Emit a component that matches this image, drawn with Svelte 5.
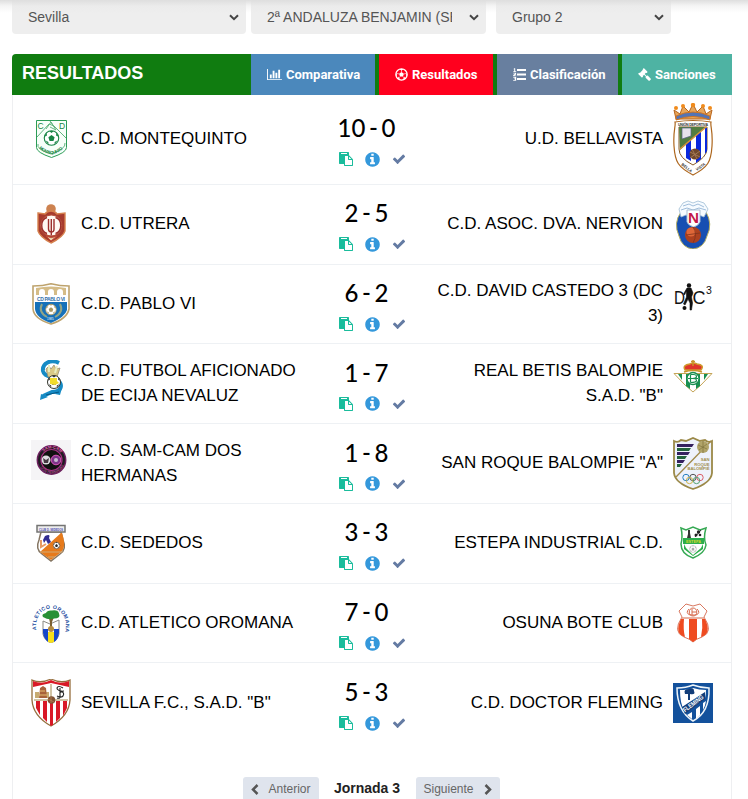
<script lang="ts">
    const filters = [
        { label: 'Sevilla', size: 'medium' },
        { label: '2ª ANDALUZA BENJAMIN (SEVILLA)', size: 'wide' },
        { label: 'Grupo 2', size: 'small' }
    ];

    const tabs = [
        { label: 'Comparativa', icon: 'chart' },
        { label: 'Resultados', icon: 'ball' },
        { label: 'Clasificación', icon: 'list' },
        { label: 'Sanciones', icon: 'gavel' }
    ];

    const matches = [
        { home: 'C.D. MONTEQUINTO', homeCrest: 'montequinto', score: '10 - 0', away: 'U.D. BELLAVISTA', awayCrest: 'bellavista' },
        { home: 'C.D. UTRERA', homeCrest: 'utrera', score: '2 - 5', away: 'C.D. ASOC. DVA. NERVION', awayCrest: 'nervion' },
        { home: 'C.D. PABLO VI', homeCrest: 'pablo', score: '6 - 2', away: 'C.D. DAVID CASTEDO 3 (DC 3)', awayCrest: 'castedo', awayLong: true },
        { home: 'C.D. FUTBOL AFICIONADO DE ECIJA NEVALUZ', homeCrest: 'ecija', homeLong: true, score: '1 - 7', away: 'REAL BETIS BALOMPIE S.A.D. "B"', awayCrest: 'betis', awayLong: true },
        { home: 'C.D. SAM-CAM DOS HERMANAS', homeCrest: 'samcam', homeLong: true, score: '1 - 8', away: 'SAN ROQUE BALOMPIE "A"', awayCrest: 'sanroque' },
        { home: 'C.D. SEDEDOS', homeCrest: 'sededos', score: '3 - 3', away: 'ESTEPA INDUSTRIAL C.D.', awayCrest: 'estepa' },
        { home: 'C.D. ATLETICO OROMANA', homeCrest: 'oromana', score: '7 - 0', away: 'OSUNA BOTE CLUB', awayCrest: 'osuna' },
        { home: 'SEVILLA F.C., S.A.D. "B"', homeCrest: 'sevilla', score: '5 - 3', away: 'C.D. DOCTOR FLEMING', awayCrest: 'fleming' }
    ];

    // every crest is 40 wide, only some are taller or shorter
    const heights: Record<string, number> = { bellavista: 73, nervion: 50, pablo: 42, sanroque: 53, sevilla: 48 };
</script>

{#snippet ball(x: number, y: number, r: number, color: string)}
    <g transform="translate({x} {y}) scale({r / 10})">
        <circle r="9.3" fill="#fff" stroke={color} stroke-width="1.4" />
        <path fill={color} d="M0-4 4-1 2.5 4h-5L-4-1zM-3-9h6L0-6.500zM6-7l3 5-3-1zM-6-7l-3 5 3-1zM8 3 4 8 4 5zM-8 3l4 5 0-3z" />
    </g>
{/snippet}

{#snippet crest(id: string)}
    <svg class="crest" width="40" height={heights[id] ?? 40} viewBox="0 0 40 {heights[id] ?? 40}" aria-hidden="true">
        {#if id === 'montequinto'}
            <path d="M5.500 1.500h30v27q0 5-15 10-15-5-15-10z" fill="#f7fff9" stroke="#2b9c57" />
            <path d="m6 18 12-13 5 2 12 12M15 10l5-7 5 8-6-3M19 2l5 7M7 25q-2 5 13 10 15-5 14-11" fill="none" stroke="#62b581" stroke-width="1" />
            {@render ball(20.5, 19, 7.8, '#168443')}
            <text x="6.500" y="10" font-size="8.500" fill="#168443">C</text>
            <text x="28" y="10" font-size="8.500" fill="#168443">D</text>
            <path id="montequinto-arc" d="M8 29q12.500 12 25 0" fill="none" />
            <text font-size="4.300" font-weight="bold" fill="#168443"><textPath href="#montequinto-arc" textLength="27">MONTEQUINTO</textPath></text>
        {:else if id === 'bellavista'}
            <path d="m3 16-2-9 6 4 3-8 6 6 4-8 4 8 6-6 3 8 6-4-2 9z" fill="#e7a65b" stroke="#b7641c" />
            <path d="M3 13q17-8 34 0v4q-17-7-34 0z" fill="#5474b4" stroke="#d4751b" />
            <g fill="#f08b1c"><circle cx="3" cy="5" r="2" /><circle cx="10" cy="3" r="2" /><circle cx="20" cy="2" r="2.200" /><circle cx="30" cy="3" r="2" /><circle cx="37" cy="5" r="2" /></g>
            <path d="M2 19q18-3 36 0c-1 4 2 8 1 24-1 16-4 21-19 29C5 64 2 59 1 43 0 27 3 23 2 19z" fill="#fff" stroke="#ad661d" stroke-width="1.200" />
            <path d="M6 24h28v22q0 8-14 16Q6 55 6 46z" fill="#fff" stroke="#895a24" />
            <path d="M13 25h5v33l-5-3zM23 25h5v31l-5 4zM32 25h2v23l-2 3z" fill="#0928dd" />
            <path d="M6 24h27L7 47z" fill="#527d40" />
            <path d="M9 25h9v8l-9 3z" fill="#e6e2eb" stroke="#555f83" stroke-width=".7" />
            <path d="M7 46 33 24" stroke="#d9923c" stroke-width="1.500" />
            <circle cx="22" cy="51" r="5.500" fill="#70472b" />
            <path d="m17 49 10 5m-8-8 5 10m-7-1 10-7" stroke="#a27854" />
            <text x="5" y="23" font-size="3.600" font-weight="bold" textLength="30" fill="#333">UNIÓN DEPORTIVA</text>
            <text x="8" y="62" font-size="3.800" font-weight="bold" transform="rotate(38 8 62)" fill="#333">BELLA</text>
            <text x="24" y="68" font-size="3.800" font-weight="bold" transform="rotate(-36 24 68)" fill="#333">VISTA</text>
        {:else if id === 'utrera'}
            <circle cx="20" cy="5" r="4.800" fill="#cd8250" />
            <path d="m7 9 7 1q2-3 6-3t6 3l8-1v18q-2 6-14 12Q9 33 7 27z" fill="#a73b2e" stroke="#d6814e" stroke-width="1.400" />
            <circle cx="20.300" cy="21.500" r="10.500" fill="#fff8f2" stroke="#b5513c" stroke-width="1.200" />
            <path d="M16 13.500c-7 2-7 14 0 16M17.500 15v10q0 3 2.800 3t2.700-3V15m-2.700 0v16.500M24.500 13.500c7 2 7 14 0 16" fill="none" stroke="#9d2f2c" stroke-width="1.400" />
            <path d="M15 32q5 3 11 0l-6 5z" fill="#e8d3ad" stroke="#c14b35" />
        {:else if id === 'nervion'}
            <path d="M8 13h25q7 12 1 24-3 12-14 13Q9 49 6 37 0 24 8 13z" fill="#174fb2" stroke="#b4af64" />
            <path d="m6 10 4-6 5-2 5 2 5-2 6 2 4 6-4 8-5-2-6 3-7-3-5 2z" fill="#f6fbff" stroke="#9ebdd4" stroke-width=".8" />
            <path d="m10 7 6-2 4 2 5-2 6 3M8 11l6-2 6 2 6-2 7 2" fill="none" stroke="#89acd0" stroke-width=".8" />
            <path d="M14 11h13v12q-2 4-6.500 5-5.500-2-6.500-5z" fill="#fff" stroke="#a9bfd2" />
            <text x="15" y="24" font-size="15" font-weight="bold" textLength="11" lengthAdjust="spacingAndGlyphs" fill="#c31848">N</text>
            <circle cx="20" cy="36" r="8" fill="#ad411f" /><circle cx="18" cy="33" r="4.500" fill="#df6738" />
            <path d="m13 36 14-2m-7-6q5 7 0 16" fill="none" stroke="#80341d" stroke-width=".8" />
        {:else if id === 'pablo'}
            <path d="M2 3q10 0 18-2.200Q29 3 38 3v23q-2 10-18 15Q3 36 2 26z" fill="#fff" stroke="#bea36d" stroke-width="1.600" />
            <path d="M5 5q15-3 30 0v7H5z" fill="#d5bc87" />
            <path d="M8 13V9q0-3 3-3t3 3v4m3 0V9q0-3 3-3t3 3v4m3 0V9q0-3 3-3t3 3v4z" fill="#fff" />
            <path d="M4 19h32v8q-2 7-16 13Q5 35 4 26z" fill="#1671b9" />
            <text x="6" y="17.500" font-size="5" font-weight="bold" textLength="28" fill="#356eaa">CD PABLO VI</text>
            <path d="M11 21q-4 8 5 13m13-13q4 8-5 13" stroke="#91a587" stroke-width="2" fill="none" />
            {@render ball(20, 26.5, 5.7, '#a99761')}
            <text x="16" y="37" font-size="3" fill="#fff">1985</text>
        {:else if id === 'castedo'}
            <text x="1" y="24" font-size="19" textLength="11" lengthAdjust="spacingAndGlyphs" fill="#111">D</text>
            <text x="19.500" y="24" font-size="19" textLength="13" lengthAdjust="spacingAndGlyphs" fill="#111">C</text>
            <text x="33" y="14" font-size="10.500" fill="#111">3</text>
            <circle cx="16" cy="5.500" r="2.200" fill="#111" />
            <path d="M14 8h4l2 5-1.500 4 1 6-1 7h-1.500v-7l-2-4-3 6-1.500-1 3-7v-6l-2 4-1-1z" fill="#111" stroke="#111" stroke-width=".6" />
            <circle cx="11.500" cy="28" r="2" fill="#111" />
        {:else if id === 'ecija'}
            <path d="M28 3c-8-4-17 0-16 8 1 6 9 5 14 9 7 5 4 12-5 12l-9 4" fill="none" stroke="#168bc5" stroke-width="4" />
            <path d="m24 34 7-6-2 7zM10 34l-1 6 8-3z" fill="#168bc5" />
            <path d="m15 9 3-3 2 3 3-4 2 4 4-1-3 9H17z" fill="#d9c987" stroke="#8b826c" stroke-width=".7" />
            <path d="M18 5v7m8-6-2 7" stroke="#e9edc0" stroke-width="2" />
            {@render ball(23, 22, 7, '#30332b')}
            <path d="M19 18h7v3l2 2-4 2-5-1z" fill="#f2dc2d" /><path d="m15 35 13-3" stroke="#075783" />
        {:else if id === 'betis'}
            <path d="m20 32-8-7L1 13.500h38L28 25z" fill="#fff" stroke="#c5a557" />
            <path d="m5 14 4 6v-6zM13 14v12l4 3V14zM23 14v15l4-3V14zM31 14v6l4-6z" fill="#198f50" />
            <path d="M12 10Q9 5 17 4q3-2 7 0 8 1 4 6z" fill="#df352b" stroke="#cf982b" stroke-width="1.400" />
            <path d="M18 1.500h4M20 0v6M11 12q9-3 18 0" fill="none" stroke="#c99329" stroke-width="1.500" />
            <circle cx="20" cy="18.500" r="6" fill="#fff" stroke="#198f50" stroke-width="1.300" />
            <path d="M17.500 14.500v8m0-8h3q3 0 3 2t-4 2q4 0 4 2t-6 2M15 18.500h10" fill="none" stroke="#198f50" stroke-width="1.200" />
        {:else if id === 'samcam'}
            <path d="M0 0h40v40H0z" fill="#f5f4f6" />
            <circle cx="20.500" cy="20" r="14.200" fill="#201b22" stroke="#6d1f5e" stroke-width="1.500" />
            <circle cx="20.500" cy="20" r="10.500" fill="#111" stroke="#a53081" stroke-width="1.200" />
            <circle cx="15" cy="20" r="4.500" fill="#dedbe1" /><path d="m12 18 3 2 3-2-1 5h-4z" fill="#453943" />
            <circle cx="25" cy="20" r="4.800" fill="#7e358a" stroke="#dc57ba" /><circle cx="25" cy="20" r="2" fill="#c7bdd0" />
            <path id="samcam-top" d="M9 20a11.500 11.500 0 0 1 23 0" fill="none" />
            <path id="samcam-bottom" d="M7 20a13.500 13.500 0 0 0 27 0" fill="none" />
            <text font-size="4" font-weight="bold" fill="#e164b1"><textPath href="#samcam-top" startOffset="9">SAM-CAM</textPath></text>
            <text font-size="3.500" fill="#d45ba9"><textPath href="#samcam-bottom" startOffset="8">DOS HERMANAS</textPath></text>
        {:else if id === 'sededos'}
            <path d="m10 9-2 8q-4 9 3 14l9 7 9-7q7-5 3-14l-2-8z" fill="#fff" stroke="#857663" stroke-width="1.500" />
            <path d="M30 10 9 29l11 8 9-7q7-5 2-20z" fill="#e67a1b" />
            <path d="M6 2.500h28V9H6z" fill="#eee" stroke="#747473" stroke-width="1.500" />
            <text x="8" y="7.500" font-size="4" font-weight="bold" textLength="24" lengthAdjust="spacingAndGlyphs" fill="#4b4bb0">CLUB D. SEDEDOS</text>
            <path d="M14 13q6-3 4 2l2 4-3 2-2-4-2 3-1-3z" fill="#322c91" /><path d="M10 17v7l5-3" fill="none" stroke="#e89b63" stroke-width="2" />
            {@render ball(25.5, 22.5, 3.5, '#292522')}
            <path d="M9 29h23M17 34h7" stroke="#d1aa77" />
        {:else if id === 'estepa'}
            <path d="m8 5 5 2 7-3 7 3 6-2q-3 10 0 17-1 8-13 13Q8 31 8 21q2-8 0-16z" fill="#fff" stroke="#36a954" stroke-width="1.500" />
            <path d="M10 15h21v6H10z" fill="#2cae4c" /><path d="M11 21v5l9 7 10-7v-5l-2 4-8 7-7-7z" fill="#2cae4c" />
            <path d="M15 7h2v3l1 5h-4l1-4z" fill="#333" /><path d="m22 14 6-7" stroke="#333" /><circle cx="23" cy="12" r="1.500" fill="#222" /><circle cx="25.500" cy="9" r="1.700" fill="#222" /><circle cx="27" cy="12" r="1.300" fill="#222" />
            <text x="13" y="19.500" font-size="4" font-weight="bold" textLength="15" lengthAdjust="spacingAndGlyphs" fill="#d3d92c">ESTEPA</text>
            {@render ball(20, 26, 3.7, '#a7a7a7')}
        {:else if id === 'oromana'}
            <path id="oromana-arc" d="M5.500 28C1-2 39-2 34.500 28" fill="none" />
            <text font-size="5.200" font-weight="bold" fill="#224ca0"><textPath href="#oromana-arc" startOffset="1" textLength="61">ATLETICO OROMANA</textPath></text>
            <path d="m12 18 7 3 9-4v14q-1 6-8 9-7-3-8-9z" fill="#fff" stroke="#8a8983" />
            <path d="M12 26h5v13q-4-3-5-9zM23 26h5v4q-1 7-5 9z" fill="#1647ca" /><path d="M17 29h6v10l-3 1-3-1z" fill="#f6df1b" />
            <path d="m18 15 1 5v8h2v-9l2-5" fill="#7b6031" /><path d="M12 14q-2-3 3-4 1-3 6-2.500 6-1 7 3 2 5-5 5-5 2-11-1.500z" fill="#289036" />
            <circle cx="20" cy="26" r="3" fill="#b28a42" />
        {:else if id === 'osuna'}
            <path d="m13 1 7 2 7-2 7 7-3 6q10 15-2 20-6 2-9 5-3-3-9-5-12-5-2-20L6 8z" fill="#fff" stroke="#d97860" />
            <path d="M8 16h3q-1 11 1 18Q1 31 8 16zM16 16h8v20l-4 3-4-3zM29 16h3q7 15-4 18 2-9 1-18z" fill="#ef4b20" />
            <path d="M9 15h22M16 6q-4 4 1 6h6q5-2 1-6m-4-1c-5 0-5 8 0 8s5-8 0-8m-1 1v6m0-3h4" fill="none" stroke="#d5684a" />
        {:else if id === 'sevilla'}
            <path d="M1 1q9 4 19-1 10 5 19 1v20q-1 16-19 26Q2 37 1 21z" fill="#fff" stroke="#956e3d" stroke-width="1.300" />
            <path d="M2 2q9 4 18-1 9 5 18 1v6L20 4 2 8zM5 22h4v14l-4-7zM12 22h4v21l-4-4zM19 22h3v24l-2 1-1-1zM25 22h4v17l-4 4zM32 22h4v7l-4 8z" fill="#d91926" />
            <path d="M3 21h34M20 5v17" stroke="#a58a4c" /><path d="M4 13h4v6H4zM14 13h4v6h-4z" fill="#c7ab72" /><path d="m9 9 3-2 3 2 1 10H8z" fill="#a8623b" /><path d="M9 12h5m-6 4h8" stroke="#e5bd75" />
            <path d="M32 9q-5-3-6 0 0 2 4 3 4 2 2 5-2 2-6 0M29 9v10m4-7q-5 0-4 4t-3 3" fill="none" stroke="#222" stroke-width="1.100" />
            <circle cx="20.500" cy="21" r="3.800" fill="#805335" /><path d="m17 20 6 3m-3-5v6" stroke="#c08857" stroke-width=".7" />
        {:else if id === 'fleming'}
            <path d="M0 0h40v40H0z" fill="#13519c" /><path d="M4 5q9 0 16-3 8 3 16 3 1 24-16 33Q4 28 4 5z" fill="#13519c" stroke="#eef5fa" stroke-width="1.500" />
            <path d="M7 7q8 0 13-2 6 2 13 2 0 4-1 8L11 27Q7 20 7 7zM14 32l5-3v7zM23 26l4-3v9l-4 4zM30 20l3-2q-1 6-3 9z" fill="#fff" />
            <path d="M12 11q-2-5 4-5 5-2 5 2 2 4-4 3v6h-2v-6zM9 24l23-15v7L12 31z" fill="#123d79" />
            <text x="12" y="29.500" font-size="6.500" font-weight="bold" textLength="24" lengthAdjust="spacingAndGlyphs" transform="rotate(-37 12 29.500)" fill="#fff">FLEMING</text>
        {:else}
            <path d="M1 4q4 2 7-1l5 1 7-3 7 3 5-1q3 3 7 1v32q-1 10-19 16Q2 46 1 36z" fill="#eef2fb" stroke="#9b8948" stroke-width="1.800" />
            <path d="M4 7h17l-2 3H4zM4 15h13l-2 3H4zM4 23h8l-2 3H4z" fill="#35215f" /><path d="M4 11h14l-2 3H4zM4 19h10l-2 3H4zM4 27h5l-2 3H4z" fill="#24633c" />
            <path d="M3 40 38 4" stroke="#a18a4b" stroke-width="1.300" /><circle cx="30" cy="10" r="6" fill="#b1a469" /><path d="m25 8 9 4m-8 1 8-6m-4-3v12" stroke="#7f743e" stroke-width=".7" />
            <g font-size="4.200" font-weight="bold" fill="#a28e4c" text-anchor="end"><text x="36.500" y="24">SAN</text><text x="36.500" y="28.500">ROQUE</text><text x="36.500" y="33">BALOMPIÉ</text></g>
            <g fill="none"><circle cx="13" cy="40.500" r="3.200" stroke="#277fbd" /><circle cx="20" cy="40.500" r="3.200" stroke="#555" /><circle cx="27" cy="40.500" r="3.200" stroke="#da5d68" /><circle cx="16.500" cy="43.500" r="3.200" stroke="#ceb64d" /><circle cx="23.500" cy="43.500" r="3.200" stroke="#55a272" /></g>
        {/if}
    </svg>
{/snippet}

{#snippet tabIcon(name: string)}
    {#if name === 'chart'}
        <svg width="15" height="13" viewBox="0 0 2048 1792"><path d="M640 896v512H384V896h256zm384-512v1024H768V384h256zm1024 1152v128H0V128h128v1408h1920zm-640-896v768h-256V640h256zm384-384v1152h-256V256h256z" /></svg>
    {:else if name === 'ball'}
        <svg width="13" height="13" viewBox="0 0 13 13"><circle cx="6.500" cy="6.500" r="5.600" fill="none" stroke="#fff" stroke-width="1.300" /><path d="m6.500 4 2.400 1.800L8 8.600H5l-.9-2.800zM4 .9l2.500 1.500L9 .9zM.9 4.500 2 7.200.7 8zM12.100 4.500 11 7.200l1.300.8zM3 10.800l.4-2.200 1.900 3.200zM10 10.800l-.4-2.200-1.900 3.200z" /><path d="M6.500 2v2m2.300 2L11 5.500M8 8.500l1.500 2m-4.500-2-1.500 2M4.200 6 2 5.500" stroke="#fff" stroke-width=".6" /></svg>
    {:else if name === 'list'}
        <svg width="13" height="13" viewBox="0 0 13 13"><path d="M4 1h9v2H4zM4 5.500h9v2H4zM4 10h9v2H4zM1.200.2h1v3h1V4H.3v-.8h.9V1.300H.4zM.3 4.700h2.800v1.700L1.500 7.500h1.700v.8H.2V7l1.800-1.200v-.3H.3zM.3 9h2.900v3.700H.2V12H2v-.7H.9v-.7H2v-.8H.3z" /></svg>
    {:else}
        <svg width="13" height="13" viewBox="0 0 1792 1792"><path d="M1771 1536q0 53-37 90l-107 108q-39 37-91 37-53 0-90-37l-363-364q-38-36-38-90 0-53 43-96l-256-256-126 126q-14 14-34 14t-34-14q2 2 12.500 12t12.500 13 10 11.500 10 13.500 6 13.500 5.500 16.500 1.500 18q0 38-28 68-3 3-16.500 18t-19 20.500-18.500 16.500-22 15.500-22 9-26 4.500q-40 0-68-28l-408-408q-28-28-28-68 0-13 4.500-26t9-22 15.500-22 16.500-18.500 20.500-19 18-16.500q30-28 68-28 10 0 18 1.500t16.500 5.500 13.500 6 13.500 10 11.500 10 13 12.500 12 12.500q-14-14-14-34t14-34l348-348q14-14 34-14t34 14q-2-2-12.500-12t-12.500-13-10-11.500-10-13.500-6-13.500-5.500-16.500-1.500-18q0-38 28-68 3-3 16.500-18t19-20.500 18.500-16.500 22-15.500 22-9 26-4.500q40 0 68 28l408 408q28 28 28 68 0 13-4.500 26t-9 22-15.500 22-16.500 18.500-20.500 19-18 16.500q-30 28-68 28-10 0-18-1.500t-16.500-5.500-13.500-6-13.500-10-11.500-10-13-12.500-12-12.500q14 14 14 34t-14 34l-126 126 256 256q43-43 96-43 52 0 91 37l363 363q37 39 37 91z" /></svg>
    {/if}
{/snippet}

<div class="page">
    <div class="filters">
        {#each filters as filter}
            <button class="filter {filter.size}">
                <span>{filter.label}</span>
                <svg width="10" height="7" viewBox="0 0 10 7"><path d="m1 1.200 4 4 4-4" fill="none" stroke="#444" stroke-width="2" /></svg>
            </button>
        {/each}
    </div>

    <div class="panel">
        <div class="panel-head">
            <h1>RESULTADOS</h1>
            <div class="tabs">
                {#each tabs as tab}
                    <button class="tab {tab.icon}">
                        {@render tabIcon(tab.icon)}
                        <span>{tab.label}</span>
                    </button>
                {/each}
            </div>
        </div>

        <div class="matches">
            {#each matches as match}
                <div class="match">
                    <div class="badge" class:long={match.homeLong}>{@render crest(match.homeCrest)}</div>
                    <div class="team">{match.home}</div>
                    <div class="result">
                        <div class="score">{match.score}</div>
                        <div class="actions">
                            <svg class="paste" width="14" height="14" viewBox="0 0 1792 1792"><path d="M768 1664h896v-640h-416q-40 0-68-28t-28-68V512H768v1152zm256-1440v-64q0-13-9.500-22.500T992 128H288q-13 0-22.500 9.500T256 160v64q0 13 9.500 22.500T288 256h704q13 0 22.500-9.500t9.500-22.500zm256 672h299l-299-299v299zm512 128v672q0 40-28 68t-68 28H736q-40 0-68-28t-28-68v-160H96q-40 0-68-28t-28-68V96q0-40 28-68T96 0h1088q40 0 68 28t28 68v328q21 13 36 28l408 408q28 28 48 76t20 88z" /></svg>
                            <svg class="info" width="17" height="17" viewBox="0 0 1792 1792"><path d="M1152 1376v-160q0-14-9-23t-23-9h-96V672q0-14-9-23t-23-9H672q-14 0-23 9t-9 23v160q0 14 9 23t23 9h96v320h-96q-14 0-23 9t-9 23v160q0 14 9 23t23 9h448q14 0 23-9t9-23zm-128-896V320q0-14-9-23t-23-9H800q-14 0-23 9t-9 23v160q0 14 9 23t23 9h192q14 0 23-9t9-23zm640 416q0 209-103 385.500T1281.500 1561 896 1664t-385.500-103T231 1281.500 128 896t103-385.500T510.500 231 896 128t385.500 103T1561 510.500 1664 896z" /></svg>
                            <svg class="check" width="14" height="14" viewBox="0 0 1792 1792"><path d="M1671 566q0 40-28 68l-724 724-136 136q-28 28-68 28t-68-28l-136-136-362-362q-28-28-28-68t28-68l136-136q28-28 68-28t68 28l294 295 656-657q28-28 68-28t68 28l136 136q28 28 28 68z" /></svg>
                        </div>
                    </div>
                    <div class="team away">{match.away}</div>
                    <div class="badge" class:long={match.awayLong}>{@render crest(match.awayCrest)}</div>
                </div>
            {/each}
        </div>

        <div class="pager">
            <button class="previous">
                <svg width="8" height="11" viewBox="0 0 8 11"><path d="m6.500 1-4.500 4.500L6.500 10" /></svg>
                <span>Anterior</span>
            </button>
            <strong>Jornada 3</strong>
            <button class="next">
                <span>Siguiente</span>
                <svg width="8" height="11" viewBox="0 0 8 11"><path d="m1.500 1L6 5.500 1.500 10" /></svg>
            </button>
        </div>
    </div>
</div>

<style>
    :global(body) {
        margin: 0;
        overflow: hidden;
    }
    * {
        box-sizing: border-box;
    }
    button {
        border: 0;
        margin: 0;
        font-family: inherit;
    }
    svg {
        display: block;
        flex: none;
    }
    .page {
        height: 799px;
        overflow: hidden;
        padding: 0 16px 0 12px;
        background: linear-gradient(#dedede 0, #f5f5f5 6px, #fff 13px);
        font-family: "Liberation Sans", Arial, sans-serif;
    }
    .filters {
        display: flex;
        height: 34px;
        gap: 5px;
    }
    .filter {
        display: flex;
        align-items: center;
        justify-content: space-between;
        height: 34px;
        padding: 0 7px 0 16px;
        border-radius: 0 0 4px 4px;
        background: linear-gradient(#dedede 0, #ebebeb 6px, #eee 13px);
        color: #555;
        font-size: 14px;
    }
    .filter.medium {
        width: 234px;
    }
    .filter.wide {
        width: 235px;
    }
    .filter.small {
        width: 175px;
        margin-left: 5px;
    }
    .filter span {
        width: 185px;
        overflow: hidden;
        white-space: nowrap;
        text-align: left;
    }
    .filter.small span {
        width: 120px;
    }
    .panel {
        width: 720px;
        margin-top: 20px;
    }
    .panel-head {
        display: flex;
        justify-content: space-between;
        height: 41px;
        border-radius: 4px 0 0 0;
        background: #107c10;
        color: #fff;
    }
    h1 {
        margin: 0;
        padding-left: 10px;
        font-size: 18px;
        line-height: 39px;
    }
    .tabs {
        display: flex;
        gap: 4px;
    }
    .tab {
        display: flex;
        align-items: center;
        gap: 4px;
        padding: 0 0 0 16px;
        color: #fff;
        fill: #fff;
        font-family: Roboto, sans-serif;
        font-size: 13px;
        font-weight: bold;
    }
    .tab span {
        white-space: nowrap;
    }
    .tab.chart {
        width: 124px;
        background: #4b88bc;
    }
    .tab.ball {
        width: 114px;
        background: #ff001e;
    }
    .tab.list {
        width: 121px;
        background: #687f9f;
    }
    .tab.gavel {
        width: 110px;
        background: #4eb3a3;
    }
    .matches {
        border: solid #eeeff1;
        border-width: 0 1px;
    }
    .match {
        display: grid;
        grid-template-columns: 40px 254px 83px 265px 40px;
        align-items: center;
        height: 79.75px;
        padding: 0 18px;
        border-bottom: 1px solid #eef1f4;
    }
    .match:first-child {
        height: 89.9px;
    }
    .match:last-child {
        border-bottom: 0;
    }
    .badge.long {
        padding-bottom: 8px;
    }
    .team {
        padding: 0 15px 2px 10px;
        color: #000;
        font-size: 17px;
        line-height: 25px;
    }
    .team.away {
        padding: 0 10px 2px 20px;
        text-align: right;
    }
    .result {
        display: flex;
        flex-direction: column;
        align-items: center;
        padding-top: 7px;
    }
    .score {
        color: #000;
        font-family: Lato, sans-serif;
        font-size: 24px;
        font-weight: 500;
        line-height: 30px;
        white-space: nowrap;
        word-spacing: -2.5px;
    }
    .actions {
        display: flex;
        align-items: center;
        gap: 11px;
        height: 26px;
        margin: 3px 0 0 11px;
    }
    .paste {
        fill: #1abc9c;
    }
    .info {
        fill: #3498db;
    }
    .check {
        fill: #647ba3;
    }
    .pager {
        display: flex;
        justify-content: center;
        align-items: flex-start;
        height: 60px;
        padding: 34px 2px 0 0;
        border: solid #eeeff1;
        border-width: 0 1px;
    }
    .pager button {
        display: flex;
        align-items: center;
        justify-content: space-between;
        height: 24px;
        padding: 0 8px;
        border-radius: 3px;
        background: #dfe4ed;
        color: #666;
        font-size: 12px;
    }
    .previous {
        width: 76px;
    }
    .next {
        width: 84px;
    }
    .pager path {
        fill: none;
        stroke: #555;
        stroke-width: 2.5;
    }
    .pager strong {
        width: 97px;
        color: #222;
        font-size: 14px;
        line-height: 22px;
        text-align: center;
    }
</style>
